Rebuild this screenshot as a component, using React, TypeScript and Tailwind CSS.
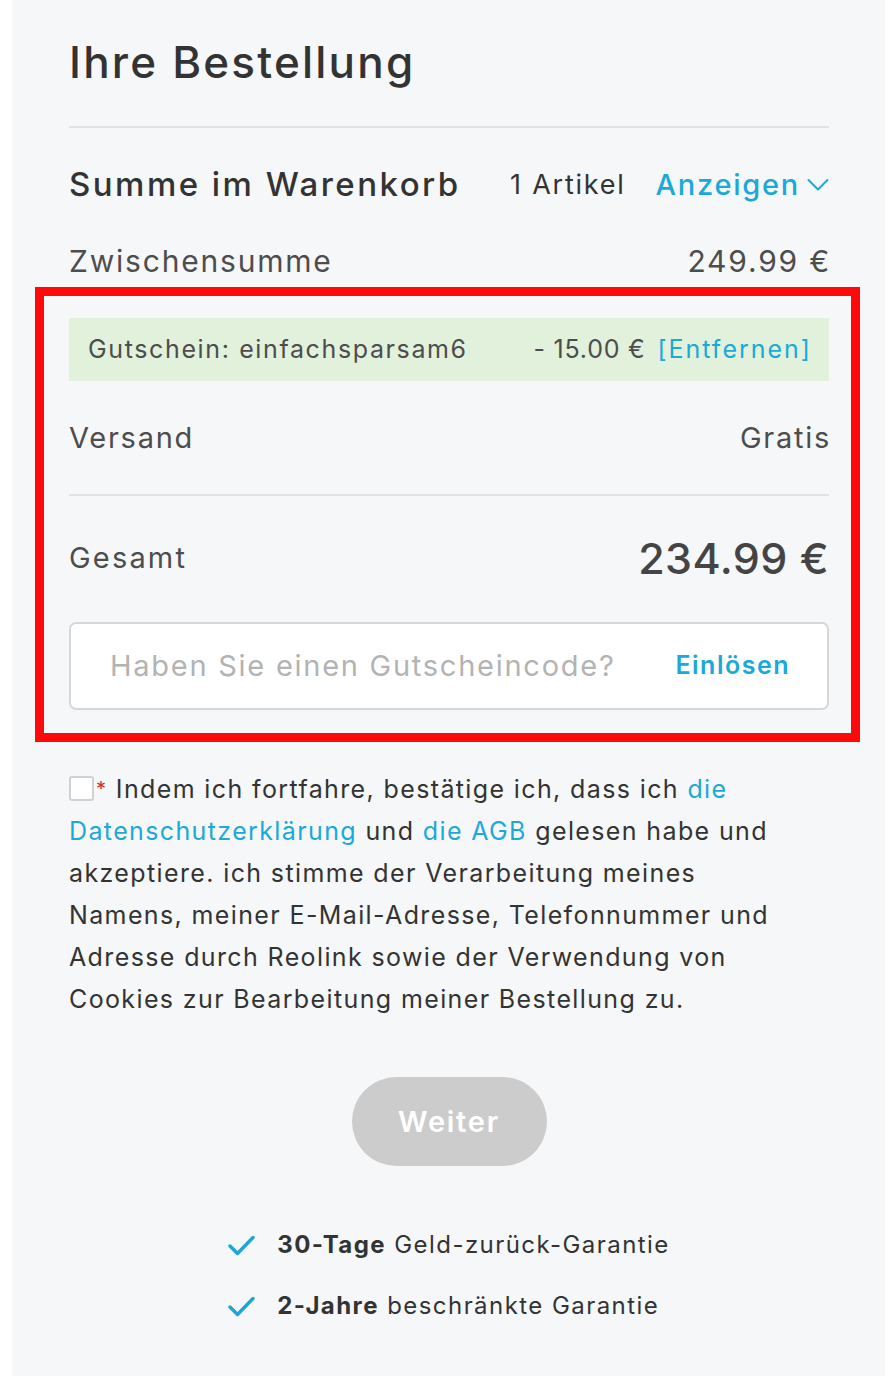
import React from 'react';

const font = { fontFamily: 'Inter, "Noto Sans", sans-serif' };

// Blue check used in the guarantee list
const Check = () => (
  <svg width="27" height="21" viewBox="0 0 27 21" fill="none" className="shrink-0">
    <path d="M2 11l7.5 7.5L25 2.5" stroke="#1ba6d6" strokeWidth="3.4" strokeLinecap="round" strokeLinejoin="round" />
  </svg>
);

const Row = ({ label, value, className = '' }: { label: string; value: React.ReactNode; className?: string }) => (
  <div className={`flex items-center justify-between ${className}`}>
    <span>{label}</span>
    <span className="-mr-[2px]">{value}</span>
  </div>
);

export default function App() {
  return (
    <div className="min-h-screen bg-white" style={font}>
      <div className="ml-[12px] w-[873px] bg-[#f6f7f9] pl-[57px] pr-[56px] pt-[38px] pb-[50px] text-[#333]">
        {/* Title */}
        <h1 className="h-[48px] text-[44px] leading-[48px] font-medium tracking-[0.05em] text-[#333]">Ihre Bestellung</h1>
        <div className="mt-[40px] h-[2px] bg-[#e2e3e5]"></div>

        {/* Cart summary header */}
        <div className="mt-[37px] flex h-[40px] items-center text-[#333]">
          <span className="text-[33px] font-medium tracking-[0.075em]">Summe im Warenkorb</span>
          <span className="ml-auto text-[27px] tracking-[0.065em]">1 Artikel</span>
          <button className="ml-[30px] flex items-center gap-[7px] text-[29px] font-medium tracking-[0.06em] text-[#1ba9d8]">
            Anzeigen
            <svg width="22" height="14" viewBox="0 0 22 14" fill="none">
              <path d="M1.5 2l9.5 9.5L20.5 2" stroke="#1ba9d8" strokeWidth="2" strokeLinecap="round" strokeLinejoin="round" />
            </svg>
          </button>
        </div>

        <Row label="Zwischensumme" value="249.99 €" className="mt-[38px] h-[36px] text-[30px] tracking-[0.06em] text-[#4d4d4d]" />

        {/* Highlighted block */}
        <div className="-ml-[34px] -mr-[31px] mt-[8px] border-[9px] border-[#ff0a0a] pl-[25px] pr-[22px] pt-[22px] pb-[23px]">
          <div className="flex h-[63px] items-center bg-[#e1f1dc] px-[19px] text-[25px] text-[#4d4d4d]">
            <span className="tracking-[0.065em]">Gutschein: einfachsparsam6</span>
            <span className="ml-auto tracking-[0.03em]">- 15.00 €</span>
            <button className="ml-[12px] -mr-[2px] tracking-[0.08em] text-[#1ba9d8]">[Entfernen]</button>
          </div>

          <Row label="Versand" value="Gratis" className="mt-[39px] h-[36px] text-[29px] tracking-[0.06em] text-[#4d4d4d]" />
          <div className="mt-[38px] h-[2px] bg-[#e2e3e5]"></div>

          <div className="mt-[38px] flex h-[48px] items-center justify-between">
            <span className="text-[29px] tracking-[0.075em] text-[#4d4d4d]">Gesamt</span>
            <span className="text-[43px] font-medium tracking-[0.01em] text-[#444]">234.99 €</span>
          </div>

          <div className="mt-[40px] flex h-[88px] items-center rounded-[7px] border-2 border-[#d6d7d9] bg-white pl-[39px] pr-[37px]">
            <span className="text-[29px] tracking-[0.06em] text-[#b3b3b3]">Haben Sie einen Gutscheincode?</span>
            <button className="ml-auto text-[25px] font-semibold tracking-[0.06em] text-[#1ba9d8]">Einlösen</button>
          </div>
        </div>

        {/* Consent */}
        <p className="mt-[26px] whitespace-nowrap text-[25px] leading-[42px] tracking-[0.055em] text-[#333]">
          <span className="mr-[2px] inline-block h-[25px] w-[25px] rounded-[3px] border-2 border-[#d0d1d3] bg-white align-[-3px]"></span>
          <span className="align-top text-[20px] text-[#d52b2b]">*</span> Indem ich fortfahre, bestätige ich, dass ich{' '}
          <a className="text-[#1ba9d8]">die</a>
          <br />
          <a className="text-[#1ba9d8]">Datenschutzerklärung</a> und <a className="text-[#1ba9d8]">die AGB</a> gelesen habe und
          <br />
          akzeptiere. ich stimme der Verarbeitung meines
          <br />
          Namens, meiner E-Mail-Adresse, Telefonnummer und
          <br />
          Adresse durch Reolink sowie der Verwendung von
          <br />
          Cookies zur Bearbeitung meiner Bestellung zu.
        </p>

        {/* Continue */}
        <div className="mt-[57px] flex justify-center">
          <button className="h-[89px] w-[195px] rounded-full bg-[#cccccc] text-[29px] font-semibold tracking-[0.06em] text-white">Weiter</button>
        </div>

        {/* Guarantees */}
        <div className="mt-[59px] flex justify-center">
          <div className="flex flex-col gap-[21px] text-[24px] tracking-[0.06em] text-[#333]">
            <div className="flex h-[40px] items-center gap-[22px]">
              <Check />
              <span>
                <b className="font-bold">30-Tage</b> Geld-zurück-Garantie
              </span>
            </div>
            <div className="flex h-[40px] items-center gap-[22px]">
              <Check />
              <span>
                <b className="font-bold">2-Jahre</b> beschränkte Garantie
              </span>
            </div>
          </div>
        </div>
      </div>
    </div>
  );
}
